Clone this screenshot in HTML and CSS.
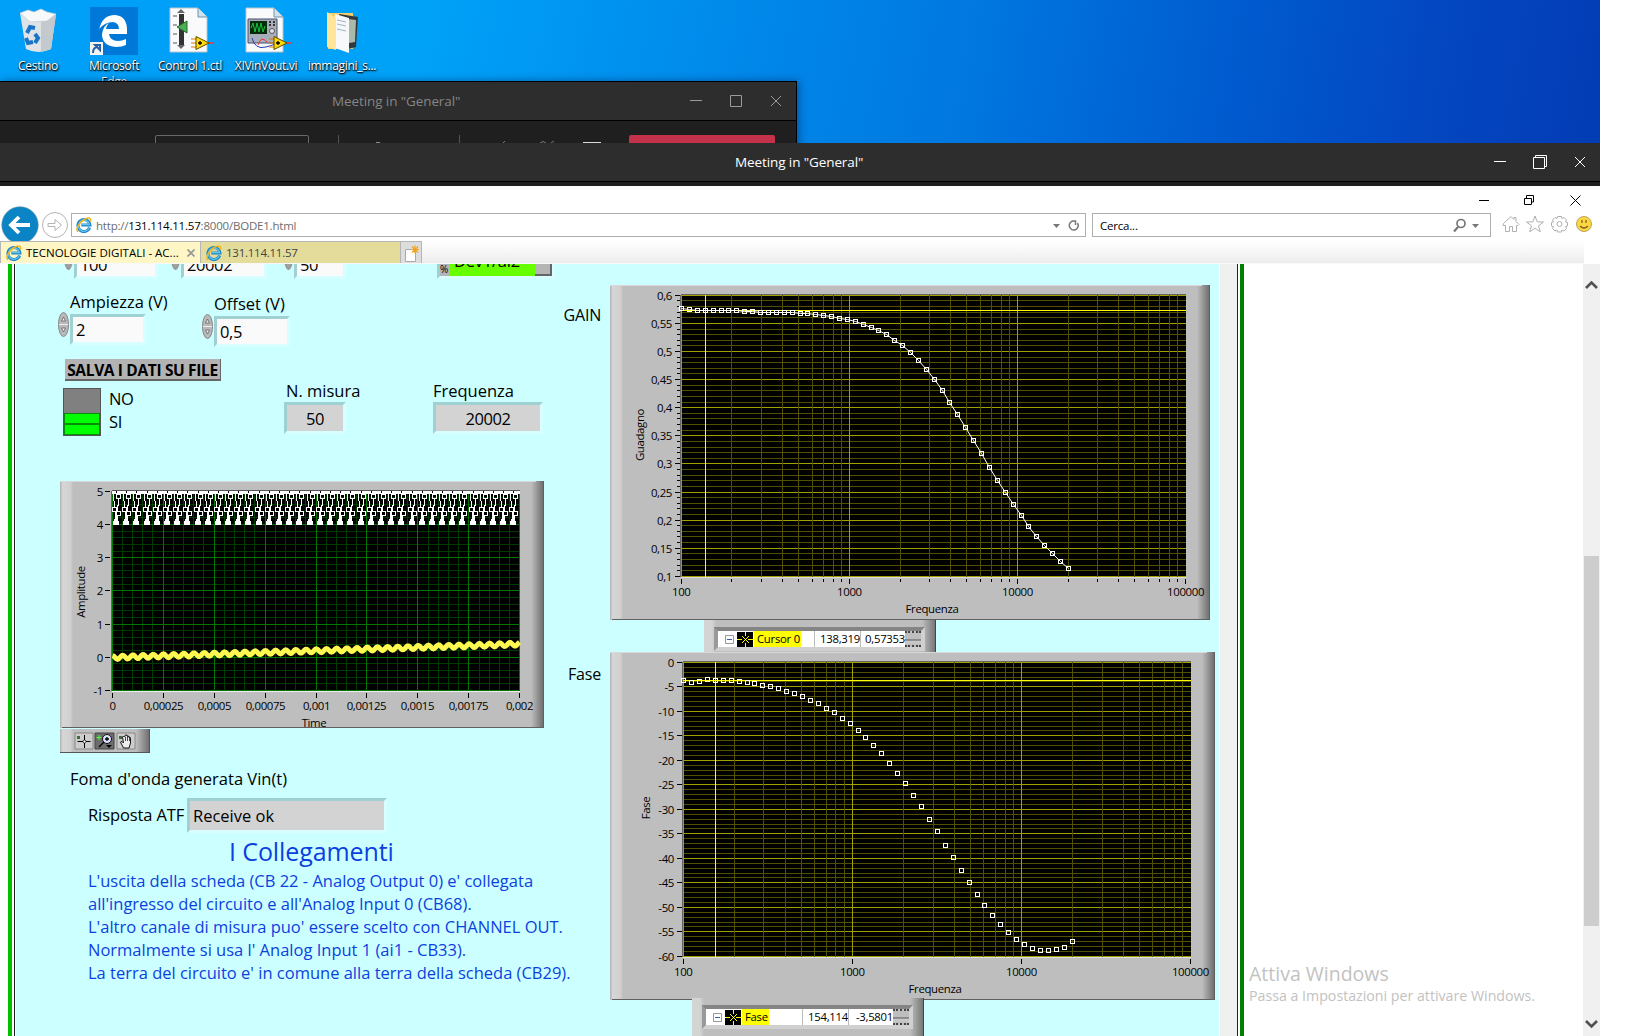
FILE: index.html
```html
<!DOCTYPE html>
<html lang="it">
<head>
<meta charset="utf-8">
<title>Meeting in "General"</title>
<link rel="stylesheet" href="styles.css">
</head>
<body>
<svg class="defs" width="0" height="0">
  <defs>
    <linearGradient id="bevelL"><stop offset="0" stop-color="#b0b0b0"/><stop offset=".2" stop-color="#d6d6d6"/><stop offset=".8" stop-color="#d0d0d0"/><stop offset="1" stop-color="#bebebe"/></linearGradient>
    <linearGradient id="bevelR"><stop offset="0" stop-color="#bebebe"/><stop offset="1" stop-color="#707070"/></linearGradient>
    <symbol id="ie" viewBox="0 0 16 16">
      <path d="M13.6 10.5A6 6 0 1 1 13.9 7.9H5.3" fill="none" stroke="#1a86c9" stroke-width="3"/>
      <path d="M13.2 10.7A5.6 5.6 0 1 1 13.5 7.7H5.3" fill="none" stroke="#63c4ee" stroke-width="1.3"/>
      <path d="M2.2 14.8C-.8 13 2.2 6.5 7.5 3S15.600 1 14.200 4.600" fill="none" stroke="#f2b61c" stroke-width="1.6"/>
    </symbol>
    <symbol id="lv" viewBox="0 0 48 48">
      <path d="M4 1h28l9 9v35H4z" fill="#f8fafb" stroke="#b9c6cf"/><path d="M32 1v9h9" fill="#cfe2ee" stroke="#6f95ae"/>
    </symbol>
    <symbol id="play" viewBox="0 0 24 16">
      <path d="M0 4h5M0 8h5M0 12h5" stroke="#e07a00"/><path d="M17 8h6" stroke="#f33" stroke-width="1.5"/>
      <path d="M5 1.500 18 8 5 14.500z" fill="#ffd900" stroke="#5a4a00"/><path d="M7 8h4M9 6v4" stroke="#000" stroke-width="1.3"/>
    </symbol>
  </defs>
</svg>

<div class="desktop">
  <div class="shortcut">
    <svg width="48" height="48" viewBox="0 0 48 48"><path d="M6 6 42 7 37 42Q24 48 12 42z" fill="#dfe3e6"/><path d="M27 7l15 0-5 35-10 3z" fill="#c3c9cd"/><path d="M6 6l8-3 6 2 7-3 6 3 9 2-9 7-17 1z" fill="#f7f8f9" stroke="#c4cbd0" stroke-width=".7"/><path d="M13 26l3-6 5 1M12 31l2 5 5-1M21 27l3 4-3 5" fill="none" stroke="#1974c8" stroke-width="4"/></svg>
    <span>Cestino</span>
  </div>
  <div class="shortcut">
    <svg width="48" height="48" viewBox="0 0 48 48"><path d="M0 0h48v48H0z" fill="#0078d7"/><path d="M9 23Q12 8 25 8q12 1 12 15v4H19q1 7 9 7 4 0 8-2v6q-4 2-10 2-14-1-14-13 1-8 7-11-3 3-3 6h13q0-6-6-7-8 0-14 7z" fill="#fff"/><path d="M0 35h13v13H0z" fill="#f4f4f4"/><path d="M3 46q0-6 5-6M5 38h5v5z" fill="none" stroke="#2a5fa5" stroke-width="2"/></svg>
    <span>Microsoft<br>Edge</span>
  </div>
  <div class="shortcut">
    <svg width="48" height="48" viewBox="0 0 48 48"><use href="#lv"/><path d="M13 7h5v32h-5z" fill="#333"/><path d="M7 9h4M7 18h4M7 27h4M7 36h4" stroke="#555"/><path d="M11 6l4-4 4 4zM11 38l4 4 4-4z" fill="#666"/><path d="M11 20l10-6v12z" fill="#4cae50" stroke="#226b2a"/><use href="#play" x="25" y="28" width="24" height="16"/></svg>
    <span>Control 1.ctl</span>
  </div>
  <div class="shortcut">
    <svg width="48" height="48" viewBox="0 0 48 48"><use href="#lv"/><path d="M6 12h29v24H6z" fill="#a9adba" stroke="#4a4f70"/><path d="M8 14h17v13H8z" fill="#062b0b"/><path d="M9 21l2-5 2 9 2-9 2 9 2-9 2 9 2-6" fill="none" stroke="#19c43b"/><path d="M28 14v5M32 14v5" stroke="#333" stroke-dasharray="2 1" stroke-width="2"/><circle cx="30" cy="24" r="2.500" fill="#e3e3e3" stroke="#555"/><path d="M10 31q3 12 14 9t10-4" fill="none" stroke="#2540b8"/><path d="M16 38q3-10 9-3" fill="none" stroke="#e33"/><use href="#play" x="27" y="28" width="24" height="16"/></svg>
    <span>XIVinVout.vi</span>
  </div>
  <div class="shortcut">
    <svg width="48" height="48" viewBox="0 0 48 48"><path d="M10 6h25v36H10z" fill="#f3cf6b"/><path d="M21 7l19 3-2 30-12 3z" fill="#33383d"/><path d="M30 12l8 1-1 22-6 1z" fill="#a9b9ac"/><path d="M17 7l14 4v35l-14-5z" fill="#f6f8fa"/><path d="M19 13l9 2M19 17l9 2M19 22l9 2" stroke="#9fb4c6"/><path d="M9 5l9 6v32l-9-3z" fill="#ffe49a"/></svg>
    <span>immagini_s...</span>
  </div>
</div>

<section class="meeting-back">
  <header><span>Meeting in "General"</span>
    <svg width="92" height="14" viewBox="0 0 92 14" fill="none" stroke="#9a9a9a"><path d="M0 6.500h12"/><path d="M40.500 1.500h11v11h-11z"/><path d="M81 2l10 10M91 2l-10 10"/></svg>
  </header>
  <div class="callbar"><i class="pill"></i><i class="sep"></i><i class="dot"></i><i class="sep two"></i>
    <svg width="110" height="9" viewBox="0 0 110 9" stroke="#777" fill="none"><path d="M11 8l2-2M48 8q3-3 6 0M59 8l3-2"/><path d="M91 7.500h18" stroke="#ddd"/></svg>
    <i class="leave"></i></div>
</section>

<section class="meeting-front">
  <header><span>Meeting in "General"</span>
    <svg width="92" height="14" viewBox="0 0 92 14" fill="none" stroke="#fff"><path d="M0 6.500h12"/><path d="M39.500 2.500h11v11h-11zM41.500 2.500v-2h11v11h-2"/><path d="M81 2l10 10M91 2l-10 10"/></svg>
  </header>
</section>

<main class="browser">
  <div class="caption"><svg width="104" height="12" viewBox="0 0 104 12" fill="none" stroke="#000"><path d="M0 6.500h10"/><path d="M45.500 4.500h7v6h-7zM47.500 4v-2.500h7v6.500h-2"/><path d="M91.500 1.500l10 10M101.500 1.500l-10 10"/></svg></div>
  <div class="navbar">
    <svg class="nav" width="71" height="37" viewBox="0 0 71 37"><circle cx="20" cy="20" r="18.300" fill="#0a84c4" stroke="#7d9aa8" stroke-width=".6"/><path d="M30 20H12M19 12l-8 8 8 8" fill="none" stroke="#fff" stroke-width="3.800"/><circle cx="55" cy="20" r="12.500" fill="#fff" stroke="#b4b4b4"/><path d="M48 18.500h7v-4l6.500 5.500-6.500 5.500v-4h-7z" fill="#fff" stroke="#b4b4b4"/></svg>
    <div class="address"><svg width="16" height="16"><use href="#ie"/></svg><span>http://<b>131.114.11.57</b>:8000/BODE1.html</span>
      <svg class="end" width="32" height="14" viewBox="0 0 32 14"><path d="M5 6h7l-3.500 4z" fill="#777"/><path d="M29.500 5A4.500 4.500 0 1 1 26 3M23.500 3h4v4" fill="none" stroke="#777" stroke-width="1.500"/></svg></div>
    <div class="search"><span>Cerca...</span><svg width="28" height="15" viewBox="0 0 28 15"><circle cx="8" cy="5.500" r="4" fill="none" stroke="#777" stroke-width="1.700"/><path d="M5 9l-4 4.500" stroke="#777" stroke-width="2.200"/><path d="M19 6h7l-3.500 4z" fill="#777"/></svg></div>
    <svg class="tools" width="94" height="20" viewBox="0 0 94 20" fill="#fff" stroke="#b0b0b0">
      <path d="M3.500 9.500 11 2.500l3 3v-2h2v4l3 3-1 1h-1.500v6h-4v-5h-3v5h-4v-6H3z"/>
      <path d="M35 2l2.200 5.800 6.300.2-5 3.800 1.800 6-5.300-3.500-5.300 3.500 1.800-6-5-3.800 6.300-.2z"/>
      <path d="M57.500 2.500h4l.5 2 2-1 2.500 2.500-1 2 2 .5v3.500l-2 .5 1 2-2.500 2.500-2-1-.5 2h-4l-.5-2-2 1-2.500-2.500 1-2-2-.5V8.500l2-.5-1-2 2.500-2.500 2 1z"/><circle cx="59.500" cy="10" r="2.500"/>
      <circle cx="84" cy="10" r="7.500" fill="#ffd83f" stroke="#b8a35a"/><path d="M82 6v3M86 6v3M80 12q4 4 8 0" fill="none" stroke="#7a6320" stroke-width="1.300"/>
    </svg>
  </div>
  <div class="tabs">
    <div class="tab active"><svg width="16" height="16"><use href="#ie"/></svg><span>TECNOLOGIE DIGITALI - AC...</span><svg class="x" width="8" height="8" viewBox="0 0 8 8"><path d="M.5.500l7 7M7.500.500l-7 7" stroke="#999" stroke-width="1.800"/></svg></div>
    <div class="tab"><svg width="16" height="16"><use href="#ie"/></svg><span>131.114.11.57</span></div>
    <div class="newtab"><svg width="16" height="18" viewBox="0 0 16 18"><path d="M1.500 4.500h10v12h-10z" fill="#fff" stroke="#aaa"/><path d="M11 .500v8M7 4.500h8M8 1.500l6 6M14 1.500l-6 6" stroke="#f0a31a" stroke-width="1.200"/></svg></div>
  </div>

  <div class="page">
    <div class="panel">
      <div class="left">
        <div class="row clipped">
          <div class="num a"><i class="spin"></i><span class="field">100</span></div>
          <div class="num b"><i class="spin"></i><span class="field">20002</span></div>
          <div class="num c"><i class="spin"></i><span class="field">50</span></div>
          <div class="chan"><i>%</i><span>Dev1/ai2</span><b></b></div>
        </div>
        <div class="row params">
          <div class="group"><label>Ampiezza (V)</label><div class="num"><svg class="knob" width="11" height="25" viewBox="0 0 11 25"><ellipse cx="5.500" cy="12.500" rx="5" ry="12" fill="#b9b9b9" stroke="#888"/><path d="M1 12.500h9" stroke="#eee"/><path d="M5.500 5l2 4h-4zM5.500 20l2-4h-4z" fill="#eee" stroke="#555" stroke-width=".7"/></svg><span class="field">2</span></div></div>
          <div class="group"><label>Offset (V)</label><div class="num"><svg class="knob" width="11" height="25" viewBox="0 0 11 25"><ellipse cx="5.500" cy="12.500" rx="5" ry="12" fill="#b9b9b9" stroke="#888"/><path d="M1 12.500h9" stroke="#eee"/><path d="M5.500 5l2 4h-4zM5.500 20l2-4h-4z" fill="#eee" stroke="#555" stroke-width=".7"/></svg><span class="field">0,5</span></div></div>
        </div>
        <div class="save">SALVA I DATI SU FILE</div>
        <div class="row status">
          <div class="switch"><i></i><i></i></div>
          <div class="choices"><span>NO</span><span>SI</span></div>
          <div class="group n"><label>N. misura</label><span class="field gray">50</span></div>
          <div class="group f"><label>Frequenza</label><span class="field gray">20002</span></div>
        </div>
        <svg id="wave" class="chart" width="484" height="247" viewBox="60 481 484 247"></svg>
        <svg class="palette" width="90" height="24" viewBox="0 0 90 24">
          <rect width="90" height="24" fill="#bebebe"/><rect width="13" height="24" fill="url(#bevelL)"/><rect x="76" width="13" height="24" fill="url(#bevelR)"/><path d="M0 23.500h90M89.500 0v24" stroke="#555"/>
          <path d="M15 4h18v16H15z" fill="#cdcdcd" stroke="#888"/><path d="M35 4h19v16H35z" fill="#6c6c6c" stroke="#444"/><path d="M57 4h18v16H57z" fill="#cdcdcd" stroke="#888"/>
          <path d="M17 7h3v3h-3z" fill="#456b35"/><path d="M17.500 12.500h13M24.500 6v13" stroke="#000"/><circle cx="24.500" cy="12.500" r="1.500" fill="#fff" stroke="#000" stroke-width=".7"/>
          <path d="M39 6v5M36.500 8.500h5" stroke="#5f3" /><circle cx="47" cy="10" r="4.500" fill="#dce0ff" stroke="#111"/><path d="M47 8v4M45 10h4M44 13l-5 5" stroke="#000" stroke-width="1.300"/><path d="M46 16h6l-3 3z" fill="#000"/>
          <path d="M59 7h3v3h-3z" fill="#456b35"/><path d="M63.500 19l-3-6q1-2 3 1l-1-6q1-2 2 0l1-2q1-1 1.500 1 1.500-1 1.500 1 2-1 2 2v4l-1.500 5z" fill="#eee" stroke="#000" stroke-width=".9"/><path d="M65.500 8v4M67.500 7v5M69.500 8v4" stroke="#000" stroke-width=".7"/>
        </svg>
        <p class="caption-wave">Foma d'onda generata Vin(t)</p>
        <div class="row answer"><label>Risposta ATF</label><span class="field gray">Receive ok</span></div>
        <h2>I Collegamenti</h2>
        <p class="notes"><span>L'uscita della scheda (CB 22 - Analog Output 0) e' collegata</span><span>all'ingresso del circuito e all'Analog Input 0 (CB68).</span><span>L'altro canale di misura puo' essere scelto con CHANNEL OUT.</span><span>Normalmente si usa l' Analog Input 1 (ai1 - CB33).</span><span>La terra del circuito e' in comune alla terra della scheda (CB29).</span></p>
      </div>
      <div class="right">
        <div class="plot"><label>GAIN</label><svg id="gain" class="chart" width="600" height="335" viewBox="610 285 600 335"></svg></div>
        <div class="legend one"><div class="list"><svg width="36" height="17" viewBox="0 0 36 17"><path d="M7.500 4.500h8v8h-8z" fill="#fff" stroke="#999"/><path d="M9 8.500h5" stroke="#335fb0"/><path d="M19 1h16v15H19z" fill="#000"/><path d="M19 8.500h5M30 8.500h5M27.500 1v4M27.500 12v4M24 5l7 7M31 5l-7 7" stroke="#ff0"/></svg><em>Cursor 0</em><span class="cx">138,319</span><span class="cy">0,57353</span><i class="grip"></i></div></div>
        <div class="plot two"><label>Fase</label><svg id="phase" class="chart" width="605" height="348" viewBox="610 652 605 348"></svg></div>
        <div class="legend two"><div class="list"><svg width="36" height="17" viewBox="0 0 36 17"><path d="M7.500 4.500h8v8h-8z" fill="#fff" stroke="#999"/><path d="M9 8.500h5" stroke="#335fb0"/><path d="M19 1h16v15H19z" fill="#000"/><path d="M19 8.500h5M30 8.500h5M27.500 1v4M27.500 12v4M24 5l7 7M31 5l-7 7" stroke="#ff0"/></svg><em>Fase</em><span class="cx">154,114</span><span class="cy">-3,5801</span><i class="grip"></i></div></div>
      </div>
    </div>
    <div class="gutter"></div>
    <div class="blank"><div class="activate"><strong>Attiva Windows</strong><span>Passa a Impostazioni per attivare Windows.</span></div></div>
    <div class="scroll"><svg width="17" height="17" viewBox="0 0 17 17"><path d="M3 11l5.500-5.500L14 11" fill="none" stroke="#505050" stroke-width="2.600"/></svg><i></i><svg width="17" height="17" viewBox="0 0 17 17"><path d="M3 6l5.500 5.500L14 6" fill="none" stroke="#505050" stroke-width="2.600"/></svg></div>
  </div>
</main>
<script src="charts.js"></script>
</body>
</html>
```
FILE: styles.css
```css
* { box-sizing: border-box; }
body { margin: 0; width: 1626px; height: 1036px; position: relative; overflow: hidden; background: #fff; font-family: "Open Sans", "Noto Sans", sans-serif; color: #000; }
svg { display: block; flex: none; }
i, em { font-style: normal; }
.defs { position: absolute; }

/* desktop */
.desktop { position: absolute; left: 0; top: 0; width: 1600px; height: 143px; padding: 7px 0 0 0; display: flex; background: linear-gradient(100deg, #009ff8 0, #00a2f8 26%, #0090ee 40%, #0078e0 60%, #005cd0 76%, #0348c2 88%, #033cb5 100%); }
.shortcut { width: 76px; display: flex; flex-direction: column; align-items: center; flex: none; }
.shortcut svg { overflow: visible; }
.shortcut span { margin-top: 3px; font-size: 12px; line-height: 16px; letter-spacing: -.3px; text-align: center; color: #fff; white-space: nowrap; text-shadow: 1px 1px 2px #000, 0 1px 1px #000; }

/* meeting windows */
.meeting-back { position: absolute; left: 0; top: 81px; width: 797px; height: 80px; background: #1f1f1f; border: solid #000; border-width: 1px 1px 0 0; box-shadow: 2px 0 8px rgba(0,20,70,.45); }
.meeting-back header { height: 39px; background: #2d2d2d; border-bottom: 1px solid #000; display: flex; justify-content: space-between; align-items: center; padding: 0 14px 0 332px; color: #858585; }
.meeting-back header, .meeting-front header { font-size: 13.5px; letter-spacing: -.1px; }
.callbar { display: flex; align-items: flex-start; padding: 14px 0 0 155px; }
.pill { width: 154px; height: 20px; border: 1px solid #686868; border-radius: 2px; }
.sep { width: 1px; height: 20px; background: #555; margin-left: 29px; }
.dot { width: 4px; height: 2px; background: #888; margin: 7px 0 0 37px; }
.sep.two { margin-left: 79px; }
.callbar svg { margin-left: 32px; }
.leave { width: 146px; height: 20px; margin-left: 27px; border-radius: 2px; background: #c4314b; }
.meeting-front { position: absolute; left: 0; top: 143px; width: 1600px; height: 43px; background: #1f1f1f; }
.meeting-front header { height: 39px; background: #2d2d2d; border-bottom: 1px solid #000; display: flex; justify-content: space-between; align-items: center; padding: 0 14px 0 735px; color: #fff; }

/* browser chrome */
.browser { position: absolute; left: 0; top: 186px; width: 1600px; height: 850px; display: flex; flex-direction: column; background: #fff; }
.caption { height: 20px; display: flex; justify-content: flex-end; align-items: flex-end; padding-right: 17px; }
.navbar { height: 35px; display: flex; overflow: hidden; }
.nav { margin-top: -1px; }
.address, .search { height: 24px; margin-top: 7px; border: 1px solid #aeaeae; display: flex; align-items: center; font-size: 11.5px; letter-spacing: -.2px; }
.address { width: 1015px; padding: 0 5px 0 4px; color: #6d6d6d; }
.address span { margin-left: 4px; }
.address b { font-weight: 400; color: #000; }
.address .end { margin-left: auto; }
.search { width: 399px; margin-left: 6px; padding: 0 9px 0 7px; justify-content: space-between; }
.tools { margin: 8px 0 0 9px; }
.tabs { height: 23px; display: flex; background: linear-gradient(#fff, #ededed); border-bottom: 1px solid #f8f8f8; margin-right: 16px; }
.tab { width: 200px; border: 1px solid #b5b5b5; border-width: 1px 0 0 1px; background: #e3dc9b; display: flex; align-items: center; padding-left: 5px; font-size: 11.5px; letter-spacing: -.25px; color: #444; white-space: nowrap; }
.tab span { margin-left: 4px; }
.tab.active { background: #fef7c5; color: #000; }
.tab.active span { letter-spacing: 0; width: 154px; }
.tab .x { margin-left: 7px; }
.newtab { width: 22px; background: #ddd; border: 1px solid #b5b5b5; border-bottom: 0; padding: 3px 0 0 3px; }

/* remote panel */
.page { flex: 1; height: 772px; display: flex; overflow: hidden; }
.panel { width: 1220px; flex: none; padding-left: 4px; display: flex; border-right: 1px solid #fff; border-left: 8px solid #fff; background: linear-gradient(90deg, #00c000 4px, #fff 4px 6px, #222 6px 7px, #fff 7px 8px, #cff 8px); }
.left { width: 547px; padding-left: 4px; flex: none; font-size: 16.5px; letter-spacing: 0; white-space: nowrap; }
.row { display: flex; align-items: flex-start; }
.field { display: block; height: 31px; background: #fafafa; border: solid; border-width: 3px; border-color: #9fd0d2 #d8ffff #d8ffff #9fd0d2; line-height: 26px; padding-left: 3px; letter-spacing: -.4px; }
.field.gray { background: #d3d3d3; }
.clipped { height: 28px; overflow: hidden; }
.clipped > div { margin-top: -16px; }
.num { display: flex; }
.num .field { width: 76px; margin-left: 1px; }
.spin { width: 9px; height: 25px; margin-left: 2px; border-radius: 50%; background: radial-gradient(#bbb, #858585); margin-top: -3px; }
.clipped .field { line-height: 27px; }
.a { margin-left: 46px; width: 107px; }
.a .field { width: 84px; }
.b { width: 113px; }
.b .field { width: 86px; }
.c .field { width: 52px; }
.chan { margin-left: 91px; width: 118px; height: 31px; display: flex; border: solid; border-width: 3px; border-color: #9fd0d2 #d8ffff #d8ffff #9fd0d2; background: #6f0; line-height: 25px; }
.chan i { width: 10px; background: #b5b5b5; font-size: 10px; line-height: 36px; }
.chan span { width: 86px; padding-left: 4px; line-height: 20px; letter-spacing: -.2px; }
.chan b { width: 17px; background: #b5b5b5; border: solid #666; border-width: 0 2px 2px 0; }
.params { height: 67px; padding-left: 42px; }
.params .group { width: 144px; }
.params .group + .group { margin-top: 2px; }
.params label { display: block; height: 22px; line-height: 19px; margin-left: 12px; }
.knob { margin-top: -2px; }
.save { width: 156px; height: 22px; margin-left: 49px; background: #b3b3b3; border: solid #666; border-width: 0 1px 2px 0; font-weight: 700; font-size: 15.5px; line-height: 22px; letter-spacing: -.35px; text-align: center; }
.status { padding-left: 47px; height: 93px; margin-top: 7px; }
.switch { width: 38px; height: 48px; flex: none; border: 1px solid #555; background: #808080; padding-top: 24px; }
.switch i { display: block; height: 11px; background: #0f0; border: 1px solid #0a8a0a; }
.choices { width: 183px; flex: none; padding-left: 8px; display: flex; flex-direction: column; line-height: 23px; margin-top: -1px; letter-spacing: -.3px; }
.status .group { margin-top: -9px; }
.status label { display: block; height: 23px; line-height: 23px; }
.status .field { height: 32px; text-align: center; padding: 0; line-height: 27px; }
.group.n { width: 149px; }
.n label { margin-left: 2px; }
.n .field { width: 62px; }
.f .field { width: 110px; }
#wave { margin-left: 44px; }
.palette { margin: 1px 0 0 44px; }
p, h2 { margin: 0; }
.caption-wave { margin: 14px 0 0 54px; line-height: 23px; }
.answer { margin: 8px 0 0 72px; line-height: 34px; }
.answer label { width: 99px; letter-spacing: -.1px; }
.answer .field { width: 200px; height: 35px; line-height: 29px; letter-spacing: 0; }
h2 { color: #0c3fe0; font-size: 25px; font-weight: 400; line-height: 37px; height: 36px; letter-spacing: -.1px; margin-left: 213px; }
.notes { margin-left: 72px; color: #0c3fe0; line-height: 23px; display: flex; flex-direction: column; }
.right { padding-top: 21px; }
.plot { display: flex; }
.plot label { width: 51px; font-size: 16px; letter-spacing: -.2px; text-align: right; padding: 19px 9px 0 0; line-height: 22px; }
.plot.two label { padding-top: 11px; }
.legend { width: 232px; height: 32px; padding: 7px 10px 0 10px; border-right: 1px solid #444; background: linear-gradient(90deg, #d4d4d4 0 8px, #bebebe 12px 218px, #777 231px); }
.legend.one { margin-left: 145px; }
.legend.two { margin: -2px 0 0 133px; height: 40px; position: relative; }
.list { height: 24px; border: solid; border-width: 4px; border-color: #858585 #d0d0d0 #d0d0d0 #999; background: #fff; display: flex; font-size: 11.3px; letter-spacing: -.25px; line-height: 16px; width: 211px; }
.legend em { background: #ff0; padding: 0 1px 0 3px; height: 16px; }
.cx, .cy { border-left: 1px solid #bbb; text-align: right; }
.cx { width: 46px; margin-left: auto; }
.cy { width: 45px; }
.grip { width: 16px; background: linear-gradient(#bebebe 6px, #555 7px, #ccc 8px, #bebebe); border: 0 dotted #444; border-width: 2px 0; }
.gutter { width: 26px; flex: none; background: linear-gradient(90deg, #f0f0f0 17px, #222 17px 18px, #fff 18px 20px, #008000 20px 24px, #fff 24px); }
.blank { flex: 1; display: flex; align-items: flex-end; }
.activate { display: flex; flex-direction: column; margin: 0 0 30px 3px; color: #c2c2c2; white-space: nowrap; }
.activate strong { font-weight: 400; font-size: 19.5px; line-height: 25px; }
.activate span { font-size: 14.2px; line-height: 20px; }
.scroll { width: 17px; background: #f0f0f0; padding: 13px 0 4px; display: flex; flex-direction: column; }
.scroll i { width: 15px; height: 370px; margin: 262px 1px auto; background: #cdcdcd; flex: none; }

/* chart text */
.chart text { font-size: 11.4px; letter-spacing: -.35px; }
```
FILE: charts.js
```js
const snap = v => Math.floor(v) + 0.5;
const line = (x1, y1, x2, y2, c) => `<path d="M${x1} ${y1}L${x2} ${y2}" stroke="${c}" shape-rendering="crispEdges"/>`;
const text = (x, y, s, anchor) => `<text x="${x}" y="${y}" text-anchor="${anchor}">${s}</text>`;

function frame(x, y, w, h) {
  return `<rect x="${x}" y="${y}" width="${w}" height="${h}" fill="#bebebe"/>
    <rect x="${x}" y="${y}" width="13" height="${h}" fill="url(#bevelL)"/>
    <rect x="${x + w - 13}" y="${y}" width="12" height="${h}" fill="url(#bevelR)"/>
    <path d="M${x} ${y + .5}h${w - 8}" stroke="#d8d8d8"/>
    <path d="M${x + 2} ${y + h - .5}h${w - 2}M${x + w - .5} ${y}v${h}" stroke="#606060"/>`;
}

function squares(points) {
  return points.map(([x, y]) => `<path d="M${snap(x) - 2} ${snap(y) - 2}h4v4h-4z" fill="none" stroke="#fff" shape-rendering="crispEdges"/>`).join('');
}

function bode(id, o) {
  const [l, t, r, b] = o.plot;
  let s = frame(...o.frame) + `<rect x="${l}" y="${t}" width="${r - l}" height="${b - t}"/>`;
  for (let i = 0; i <= o.rows * 5; i++) {
    const y = snap(o.y0 + i * o.step / 5), major = i % 5 === 0;
    s += line(l, y, r, y, major ? '#a0a000' : '#505000');
    if (major) {
      s += line(l - 6, y, l - 1, y, '#000') + text(o.labelX, y + 4, o.label(i / 5), 'end');
    } else if (o.minorTicks) s += line(l - 4, y, l - 1, y, '#000');
  }
  for (let d = 0; d < 3; d++) for (let m = 1; m < 10; m++) {
    const x = snap(o.x0 + (d + Math.log10(m)) * o.decade);
    s += line(x, t, x, b, m === 1 ? '#a0a000' : '#505000');
    if (m === 1 || o.minorTicks) s += line(x, b + 2, x, b + (m === 1 ? 7 : 5), '#000');
  }
  const end = snap(o.x0 + 3 * o.decade);
  s += line(end, b + 2, end, b + 7, '#000');
  for (let d = 0; d < 4; d++) s += text(o.x0 + d * o.decade, b + 19, 100 * 10 ** d, 'middle');
  s += line(l - .5, t, l - .5, b, '#666') + line(l, t - .5, r, t - .5, '#666') + line(l, b + .5, r, b + .5, '#ddd');
  s += line(o.cursor[0], t, o.cursor[0], b, '#ff0') + line(l, o.cursor[1], r, o.cursor[1], '#ff0');
  if (o.joined) s += `<polyline points="${o.points.map(p => p.map(snap).join()).join(' ')}" fill="none" stroke="#fff"/>`;
  s += squares(o.points);
  s += text(o.titleX, b + 36, 'Frequenza', 'middle');
  s += `<text transform="translate(${o.side[0]} ${o.side[1]}) rotate(-90)" text-anchor="middle">${o.side[2]}</text>`;
  document.getElementById(id).innerHTML = s;
}

/* both sweeps hold 50 samples, evenly spaced in log frequency */
const gainY = [308.3,309.3,310.6,310.6,310.6,310.6,310.6,310.6,311.6,311.6,312.6,312.6,312.6,312.6,312.6,313.3,313.3,314.3,315.3,316.3,318.3,319.3,321.3,324.3,327.3,330.3,334.3,340.3,345.3,352.3,360.3,369.3,379.3,390.3,402.3,414.3,427.3,440.3,453.3,467.3,480.3,492.3,504.3,515.3,526.3,536.3,545.3,553.3,561.3,568.3];
const phaseY = [680.3,682.3,681.3,679.3,680.3,680.3,680.3,681.3,682.3,683.3,685.3,686.3,688.3,691.3,693.3,696.3,700.3,703.3,708.3,712.3,718.3,723.3,730.3,737.3,745.3,753.3,763.3,773.3,783.3,795.3,806.3,819.3,831.3,845.3,857.3,870.3,882.3,894.3,905.3,915.3,924.3,932.3,939.3,944.3,948.3,950.3,950.3,949.3,947.3,941.3];

bode('gain', {
  frame: [610, 285, 600, 335], plot: [681, 295, 1186, 577], x0: 681.3, y0: 295.3, step: 28.1, rows: 10, decade: 168.1,
  labelX: 672, label: i => String(+(0.6 - i * 0.05).toFixed(2)).replace('.', ','), minorTicks: true, joined: true,
  cursor: [705.5, 310.5], titleX: 932, side: [644, 435, 'Guadagno'],
  points: gainY.map((y, i) => [681.6 + i * 7.894, y])
});
bode('phase', {
  frame: [610, 652, 605, 348], plot: [683, 662, 1191, 957], x0: 683.3, y0: 662.3, step: 24.5, rows: 12, decade: 169.05,
  labelX: 674, label: i => String(-5 * i), minorTicks: false, joined: false,
  cursor: [715.5, 680.5], titleX: 935, side: [650, 808, 'Fase'],
  points: phaseY.map((y, i) => [683.6 + i * 7.93, y])
});

(function waveform() {
  let s = frame(60, 481, 484, 247) + '<rect x="112" y="491" width="408" height="200"/>';
  const grid = (i, c) => {
    const x = snap(112.2 + i * 10.19), y = snap(491.3 + i * 6.64);
    return line(x, 491, x, 691, c) + (i <= 30 ? line(112, y, 520, y, c) : '');
  };
  for (let i = 0; i < 40; i++) if (i % 5) s += grid(i, '#003c00');
  for (let i = 0; i <= 40; i += 5) s += grid(i, '#007800');
  for (let i = 0; i <= 6; i++) {
    const y = snap(491.3 + i * 33.2);
    s += line(105, y, 110, y, '#000') + text(103, y + 4, 5 - i, 'end');
  }
  ['0', '0,00025', '0,0005', '0,00075', '0,001', '0,00125', '0,0015', '0,00175', '0,002'].forEach((v, i) => {
    const x = snap(112.2 + i * 50.95);
    s += line(x, 693, x, 698, '#000') + text(x, 710, v, 'middle');
  });

  /* Vin: sampled square-marker trace, 40 periods */
  let boxes = '', blobs = '', notches = '';
  for (let i = 0; i < 40; i++) {
    const x = Math.round(112 + i * 10.19) + .5;
    boxes += `M${x + 4} 494.500h4v4h-4zM${x + 6} 498v8M${x + 5} 505v6M${x + 1} 494v7M${x + 2} 501v6M${x} 507.500h4v4h-4zM${x + 3} 511v8M${x + 4} 511.500h4v4h-4zM${x + 5} 515v5M${x + 4} 515v4`;
    blobs += `M${x + 1.5} 519h4v2h1v4h-6v-4h1z`;
    notches += `M${x + 4} 491v2`;
  }
  s += `<g shape-rendering="crispEdges"><path d="${boxes}" fill="none" stroke="#fff"/><path d="${blobs}" fill="#fff"/><path d="M112 492.500h408" stroke="#fff" stroke-width="3"/><path d="${notches}" stroke="#000"/></g>`;

  let wave = '';
  for (let x = 0; x <= 407; x++) wave += (x ? 'L' : 'M') + (112.5 + x) + ' ' + (657.5 - x * .033 - 1.9 * Math.cos(x / 10.19 * 2 * Math.PI)).toFixed(2);
  s += `<path d="${wave}" fill="none" stroke="#fff850" stroke-width="5"/>`;
  s += line(111.5, 491, 111.5, 691, '#666') + line(112, 490.5, 520, 490.5, '#555') + line(112, 691.5, 520, 691.5, '#eee');
  s += text(314, 727, 'Time', 'middle') + '<text transform="translate(85 592) rotate(-90)" text-anchor="middle">Amplitude</text>';
  document.getElementById('wave').innerHTML = s;
})();
```
